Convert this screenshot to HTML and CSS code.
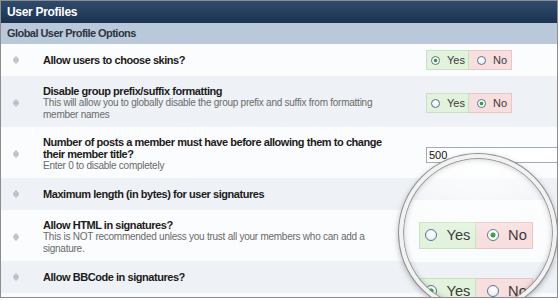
FILE: index.html
```html
<!DOCTYPE html>
<html>
<head>
<meta charset="utf-8">
<title>User Profiles</title>
<link rel="stylesheet" href="styles.css">
</head>
<body>
<div class="panel">
  <div class="panel-head">User Profiles</div>
  <div class="panel-sub">Global User Profile Options</div>

  <div class="row row-a single">
    <span class="handle"><svg width="6" height="8" viewBox="0 0 6 8"><path d="M3 0.6 L5.4 3.3 H0.6 Z M3 7.4 L5.4 4.7 H0.6 Z" fill="#dde2e7" stroke="#98a2ad" stroke-width="0.8" stroke-linejoin="round"/></svg></span>
    <div class="desc"><div class="title">Allow users to choose skins?</div></div>
    <div class="ctrl">
      <div class="radios">
        <label class="opt opt-yes"><input type="radio" name="r1" checked><span>Yes</span></label>
        <label class="opt opt-no"><input type="radio" name="r1"><span>No</span></label>
      </div>
    </div>
  </div>

  <div class="row row-b">
    <span class="handle"><svg width="6" height="8" viewBox="0 0 6 8"><path d="M3 0.6 L5.4 3.3 H0.6 Z M3 7.4 L5.4 4.7 H0.6 Z" fill="#dde2e7" stroke="#98a2ad" stroke-width="0.8" stroke-linejoin="round"/></svg></span>
    <div class="desc">
      <div class="title">Disable group prefix/suffix formatting</div>
      <div class="note">This will allow you to globally disable the group prefix and suffix from formatting member names</div>
    </div>
    <div class="ctrl">
      <div class="radios">
        <label class="opt opt-yes"><input type="radio" name="r2"><span>Yes</span></label>
        <label class="opt opt-no"><input type="radio" name="r2" checked><span>No</span></label>
      </div>
    </div>
  </div>

  <div class="row row-a">
    <span class="handle"><svg width="6" height="8" viewBox="0 0 6 8"><path d="M3 0.6 L5.4 3.3 H0.6 Z M3 7.4 L5.4 4.7 H0.6 Z" fill="#dde2e7" stroke="#98a2ad" stroke-width="0.8" stroke-linejoin="round"/></svg></span>
    <div class="desc">
      <div class="title">Number of posts a member must have before allowing them to change their member title?</div>
      <div class="note">Enter 0 to disable completely</div>
    </div>
    <div class="ctrl"><input class="field" type="text" value="500"></div>
  </div>

  <div class="row row-b single">
    <span class="handle"><svg width="6" height="8" viewBox="0 0 6 8"><path d="M3 0.6 L5.4 3.3 H0.6 Z M3 7.4 L5.4 4.7 H0.6 Z" fill="#dde2e7" stroke="#98a2ad" stroke-width="0.8" stroke-linejoin="round"/></svg></span>
    <div class="desc"><div class="title">Maximum length (in bytes) for user signatures</div></div>
    <div class="ctrl"></div>
  </div>

  <div class="row row-a">
    <span class="handle"><svg width="6" height="8" viewBox="0 0 6 8"><path d="M3 0.6 L5.4 3.3 H0.6 Z M3 7.4 L5.4 4.7 H0.6 Z" fill="#dde2e7" stroke="#98a2ad" stroke-width="0.8" stroke-linejoin="round"/></svg></span>
    <div class="desc">
      <div class="title">Allow HTML in signatures?</div>
      <div class="note">This is NOT recommended unless you trust all your members who can add a signature.</div>
    </div>
    <div class="ctrl"></div>
  </div>

  <div class="row row-b single">
    <span class="handle"><svg width="6" height="8" viewBox="0 0 6 8"><path d="M3 0.6 L5.4 3.3 H0.6 Z M3 7.4 L5.4 4.7 H0.6 Z" fill="#dde2e7" stroke="#98a2ad" stroke-width="0.8" stroke-linejoin="round"/></svg></span>
    <div class="desc"><div class="title">Allow BBCode in signatures?</div></div>
    <div class="ctrl"></div>
  </div>

  <div class="lens">
    <div class="lens-band lens-top"></div>
    <div class="lens-band lens-b lens-thin"></div>
    <div class="lens-band lens-a lens-mid">
      <div class="radios">
        <label class="opt opt-yes"><input type="radio" name="r5"><span>Yes</span></label>
        <label class="opt opt-no"><input type="radio" name="r5" checked><span>No</span></label>
      </div>
    </div>
    <div class="lens-band lens-b lens-low">
      <div class="radios">
        <label class="opt opt-yes"><input type="radio" name="r6" checked><span>Yes</span></label>
        <label class="opt opt-no"><input type="radio" name="r6"><span>No</span></label>
      </div>
    </div>
  </div>
</div>
</body>
</html>
```

FILE: styles.css
```css
* { box-sizing: border-box; }
html, body { margin: 0; background: #ffffff; }
body {
  width: 560px;
  height: 300px;
  overflow: hidden;
  font-family: "Liberation Sans", Arial, sans-serif;
}

.panel {
  position: relative;
  width: 558px;
  height: 298px;
  border: 1px solid #8d8d8d;
  overflow: hidden;
  background: #f9fafb;
}

.panel-head {
  height: 22px;
  padding-left: 6px;
  background: linear-gradient(#2f4b6c, #1c3352);
  color: #ffffff;
  font-weight: bold;
  font-size: 12px;
  line-height: 23px;
  letter-spacing: -0.3px;
}

.panel-sub {
  height: 21px;
  padding-left: 6px;
  background: #b9c9d9;
  color: #2b3542;
  font-weight: bold;
  font-size: 11px;
  line-height: 21px;
  letter-spacing: -0.55px;
}

.row {
  display: grid;
  grid-template-columns: 42px 352px 1fr;
  align-items: center;
  padding: 9px 0 6px;
}
.row.single { height: 32px; padding: 0; }
.row-a { background: #fbfcfd; }
.row-b { background: #eef2f6; }

.handle {
  display: flex;
  padding-left: 12px;
}

.title {
  font-size: 11px;
  font-weight: bold;
  color: #1b1b1b;
  line-height: 12px;
  letter-spacing: -0.45px;
}
.note {
  font-size: 10px;
  color: #6a6a6a;
  line-height: 12px;
  letter-spacing: -0.25px;
}

.ctrl { padding-left: 31px; }

.radios {
  display: inline-flex;
  height: 20px;
  font-size: 11px;
  color: #3a3a3a;
}
.opt {
  display: flex;
  align-items: center;
  gap: 7px;
  width: 43px;
  border: 1px solid;
}
.opt-yes {
  padding-left: 4px;
  background: #e2f2dd;
  border-color: #c8e2c0;
}
.opt-no {
  padding-left: 8px;
  background: #f8dfdf;
  border-color: #ebc5c5;
  border-left: 0;
}
.opt input {
  appearance: none;
  -webkit-appearance: none;
  margin: 0;
  width: 9px;
  height: 9px;
  border: 1px solid #5a7394;
  border-radius: 50%;
  background: radial-gradient(circle at 50% 35%, #ffffff, #e4e8ee);
  flex: none;
}
.opt input:checked {
  background: radial-gradient(circle, #2fa83a 0 1.6px, #ffffff 2.2px);
}

.field {
  width: 140px;
  height: 16px;
  margin: 0;
  padding: 0 2px;
  border: 1px solid #a3abb6;
  background: #ffffff;
  font-family: "Liberation Sans", Arial, sans-serif;
  font-size: 11px;
  color: #111;
}

/* magnifier */
.lens {
  position: absolute;
  left: 398px;
  top: 153px;
  width: 158px;
  height: 158px;
  border-radius: 50%;
  border: 4px solid #f2f2f2;
  box-shadow: 0 0 0 1px #8f8f8f, 0 2px 6px rgba(0, 0, 0, 0.35);
  overflow: hidden;
  display: flex;
  flex-direction: column;
  background: #fbfcfd;
}
.lens::before {
  content: "";
  position: absolute;
  inset: 0;
  border-radius: 50%;
  background: radial-gradient(ellipse 80% 45% at 50% 8%, rgba(255,255,255,0.85), rgba(255,255,255,0) 100%);
  z-index: 1;
  pointer-events: none;
}
.lens::after {
  content: "";
  position: absolute;
  inset: 0;
  border-radius: 50%;
  box-shadow: inset 0 0 0 1px #9a9a9a, inset 0 0 6px rgba(0, 0, 0, 0.28);
  z-index: 2;
  pointer-events: none;
}
.lens-band { flex: none; }
.lens-a { background: #fbfcfd; }
.lens-b { background: #eef2f6; }
.lens-top { height: 20px; background: #f8fafb; }
.lens-thin { height: 22px; }
.lens-mid { height: 62px; padding: 22px 0 0 16px; }
.lens-low { flex: 1; padding: 16px 0 0 16px; }
.lens .radios { zoom: 1.33; }
```
